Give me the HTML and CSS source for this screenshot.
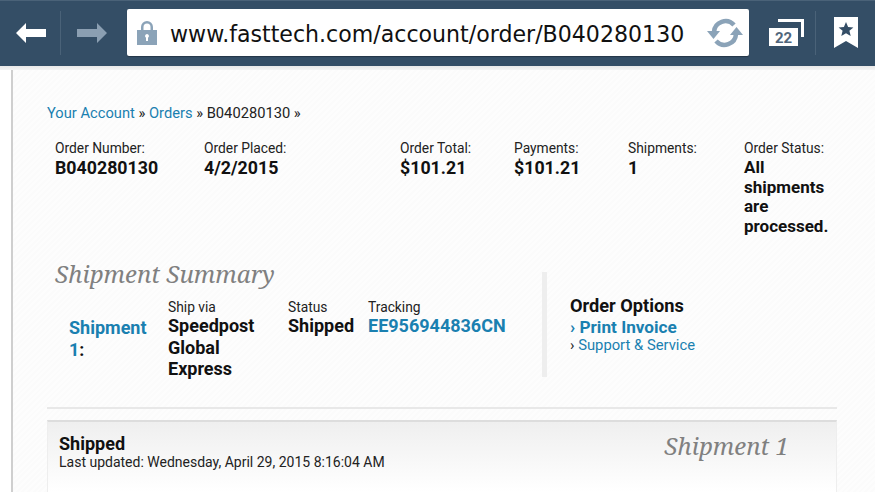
FILE: index.html
```html
<!DOCTYPE html>
<html lang="en">
<head>
<meta charset="utf-8">
<title>Order B040280130</title>
<link rel="stylesheet" href="styles.css">
</head>
<body>
<header class="bar">
  <svg class="ic back" viewBox="0 0 30 20"><path d="M0 10 10 0v6h20v8H10v6z" fill="#fff"/></svg>
  <span class="sep sep-a"></span>
  <svg class="ic fwd" viewBox="0 0 30 20"><path d="M30 10 20 0v6H0v8h20v6z" fill="#8b9fb2"/></svg>
  <div class="url">
    <svg class="lock" viewBox="0 0 20 25"><path d="M4 11V7a6 6 0 0 1 12 0v4h-2.500V7a3.500 3.500 0 0 0-7 0v4z" fill="#8ba3b8"/><path fill-rule="evenodd" d="M0 10h20v15H0zM10 14a2 2 0 0 0-1 3.700V21h2v-3.300A2 2 0 0 0 10 14z" fill="#8ba3b8"/></svg>
    <span class="url-text">www.fasttech.com/account/order/B040280130</span>
    <svg class="reload" viewBox="0 0 36 30"><g fill="none" stroke="#8ba3b8" stroke-width="4.500"><path d="M7 14a11.500 11.500 0 0 1 20-7"/><path d="M29 16a11.500 11.500 0 0 1-20 7"/></g><path d="M0 13h13l-6.500 8zM23 17h13l-6.500-8z" fill="#8ba3b8"/></svg>
  </div>
  <svg class="tabs" viewBox="0 0 35 27"><path d="M9 0h26v18h-3V3H9z" fill="#fff"/><path d="M0 9h29v18H0z" fill="#fff"/><text x="14.500" y="24" class="tabs-num">22</text></svg>
  <span class="sep sep-b"></span>
  <svg class="mark" viewBox="0 0 24 31"><path d="M0 0h24v31l-12-7-12 7z" fill="#fff"/><path d="m12 5 2.100 5 5.300.4-4 3.400 1.300 5.200L12 16.200 7.300 19l1.300-5.200-4-3.400 5.300-.4z" fill="#344e66"/></svg>
</header>
<div class="strip"></div>
<main class="page">
  <nav class="crumbs"><a>Your Account</a> » <a>Orders</a> » B040280130 »</nav>
  <section class="order">
    <div class="cell w-num"><span class="lbl">Order Number:</span><b>B040280130</b></div>
    <div class="cell w-date"><span class="lbl">Order Placed:</span><b>4/2/2015</b></div>
    <div class="cell w-total"><span class="lbl">Order Total:</span><b>$101.21</b></div>
    <div class="cell w-pay"><span class="lbl">Payments:</span><b>$101.21</b></div>
    <div class="cell w-ship"><span class="lbl">Shipments:</span><b>1</b></div>
    <div class="cell w-status"><span class="lbl">Order Status:</span><b class="status-text">All shipments are processed.</b></div>
  </section>
  <section class="summary">
    <div class="sum-left">
      <h2 class="serif">Shipment Summary</h2>
      <div class="sum-row">
        <div class="s-name"><a>Shipment</a> <a>1</a>:</div>
        <div class="s-via"><span class="lbl">Ship via</span><b>Speedpost Global Express</b></div>
        <div class="s-status"><span class="lbl">Status</span><b>Shipped</b></div>
        <div class="s-track"><span class="lbl">Tracking</span><b><a>EE956944836CN</a></b></div>
      </div>
    </div>
    <aside class="options">
      <h3>Order Options</h3>
      <div class="opt-main"><span class="chev">›</span> <a>Print Invoice</a></div>
      <div class="opt-sub"><span class="chev-sub">›</span> <a>Support &amp; Service</a></div>
    </aside>
  </section>
  <hr class="rule">
  <section class="card">
    <div>
      <div class="card-title">Shipped</div>
      <div class="card-sub">Last updated: Wednesday, April 29, 2015 8:16:04 AM</div>
    </div>
    <div class="serif card-ship">Shipment 1</div>
  </section>
</main>
</body>
</html>
```
FILE: styles.css
```css
* { box-sizing: border-box; }
html, body { margin: 0; padding: 0; height: 492px; overflow: hidden; background: #fff; }
body { font-family: Roboto, "Liberation Sans", sans-serif; color: #111; }
a { color: #1a80b0; }

.bar { height: 66px; background: #344e66; display: flex; align-items: center; border-top: 1px solid #4a6278; padding-bottom: 2px; }
.ic { width: 30px; height: 20px; flex: none; }
.back { margin-left: 16px; }
.sep { width: 1px; height: 44px; background: #4a6278; flex: none; }
.sep-a { margin-left: 14px; }
.fwd { margin-left: 16px; }
.url { width: 622px; height: 47px; margin-left: 20px; background: #fff; border-radius: 2px; display: flex; align-items: center; flex: none; box-shadow: 0 1px 1px rgba(0,0,0,.3); }
.lock { width: 20px; height: 25px; margin-left: 10px; flex: none; }
.url-text { margin-left: 13px; padding-top: 2px; font-family: "Comic Sans MS", cursive, "DejaVu Sans", sans-serif; font-size: 22.100px; white-space: nowrap; color: #111; flex: 1; min-width: 0; }
.reload { width: 36px; height: 30px; margin-right: 6px; flex: none; }
.tabs { width: 35px; height: 27px; margin-left: 20px; flex: none; }
.tabs-num { font: 700 15px Roboto, sans-serif; fill: #50667c; text-anchor: middle; }
.sep-b { margin-left: 11px; }
.mark { width: 24px; height: 31px; margin-left: 18px; flex: none; }

.strip { height: 4px; background: linear-gradient(#e8e8e8, #f4f4f4); }

.page { margin-left: 11px; height: 422px; padding: 34px 38px 0 34px; border-left: 2px solid #cfcfcf; overflow: hidden;
  background: repeating-linear-gradient(135deg, #fbfbfb 0 2px, #fdfdfd 2px 4px); }
.crumbs { font-size: 14.700px; line-height: 18px; color: #222; }

.lbl { display: block; font-size: 13.800px; line-height: 16px; color: #222; }
b { display: block; font-weight: 700; }

.order { display: flex; margin: 18px 0 0 8px; }
.cell b { font-size: 17.800px; line-height: 19.500px; margin-top: 2px; }
.cell .status-text { font-size: 17px; margin-top: 2px; }
.w-num { width: 149px; }
.w-date { width: 196px; }
.w-total { width: 114px; }
.w-pay { width: 114px; }
.w-ship { width: 116px; }
.w-status { width: 90px; }

.summary { display: flex; margin-top: 24px; }
.sum-left { width: 495px; padding-left: 8px; flex: none; }
.serif { font-family: "Noto Serif", "DejaVu Serif", "Liberation Serif", serif; font-style: italic; font-weight: 400; color: #808080; }
h2 { margin: 0; font-size: 24px; line-height: 28px; }
.sum-row { display: flex; margin-top: 11px; font-size: 18px; }
.s-name { width: 85px; margin: 18px 14px 0 14px; font-weight: 700; font-size: 18px; line-height: 22px; }
.s-via { width: 120px; }
.s-status { width: 80px; }
.s-track { flex: none; }
.sum-row b { font-size: 18px; line-height: 21.500px; }
.options { height: 105px; margin-top: 12px; border-left: 5px solid #eeeeee; padding: 24px 0 0 23px; flex: 1; }
h3 { margin: 0; font-size: 18.200px; line-height: 20px; font-weight: 700; }
.opt-main { font-size: 17.200px; font-weight: 700; line-height: 20px; margin-top: 1px; }
.chev { color: #1a80b0; }
.opt-sub { font-size: 14.800px; line-height: 17px; }
.chev-sub { color: #222; }

.rule { border: 0; height: 2px; background: #e8e8e8; margin: 27px 0 0; }
.card { margin-top: 11px; height: 90px; border-top: 2px solid #ddd; border-right: 1px solid #eee; border-left: 1px solid #eee; background: linear-gradient(#efefef, #fff 70px); display: flex; justify-content: space-between; padding: 11px 47px 0 11px; }
.card-title { font-size: 18px; line-height: 21px; font-weight: 700; }
.card-sub { font-size: 14px; line-height: 16px; color: #222; }
.card-ship { font-size: 24px; line-height: 25px; }
```
